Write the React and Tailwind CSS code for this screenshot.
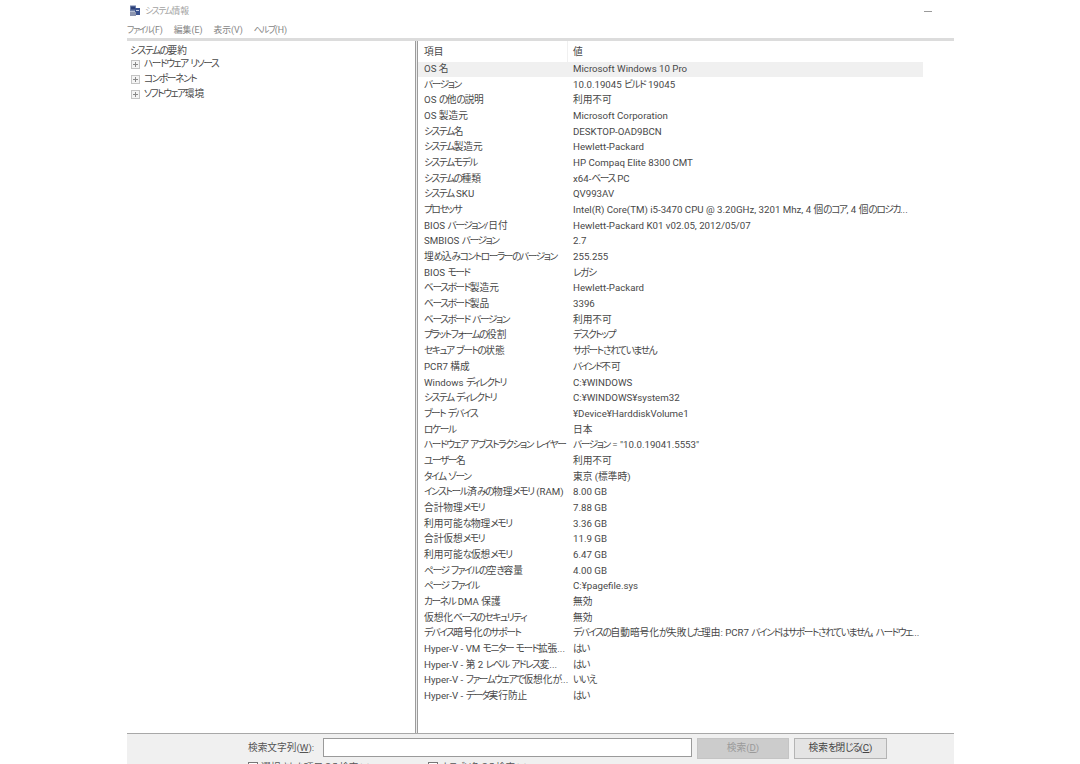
import React from 'react';

const rows = [
  ['OS 名', 'Microsoft Windows 10 Pro'],
  ['バージョン', '10.0.19045 ビルド 19045'],
  ['OS の他の説明', '利用不可'],
  ['OS 製造元', 'Microsoft Corporation'],
  ['システム名', 'DESKTOP-OAD9BCN'],
  ['システム製造元', 'Hewlett-Packard'],
  ['システムモデル', 'HP Compaq Elite 8300 CMT'],
  ['システムの種類', 'x64-ベース PC'],
  ['システム SKU', 'QV993AV'],
  ['プロセッサ', 'Intel(R) Core(TM) i5-3470 CPU @ 3.20GHz, 3201 Mhz, 4 個のコア, 4 個のロジカ...'],
  ['BIOS バージョン/日付', 'Hewlett-Packard K01 v02.05, 2012/05/07'],
  ['SMBIOS バージョン', '2.7'],
  ['埋め込みコントローラーのバージョン', '255.255'],
  ['BIOS モード', 'レガシ'],
  ['ベースボード製造元', 'Hewlett-Packard'],
  ['ベースボード製品', '3396'],
  ['ベースボード バージョン', '利用不可'],
  ['プラットフォームの役割', 'デスクトップ'],
  ['セキュア ブートの状態', 'サポートされていません'],
  ['PCR7 構成', 'バインド不可'],
  ['Windows ディレクトリ', 'C:¥WINDOWS'],
  ['システム ディレクトリ', 'C:¥WINDOWS¥system32'],
  ['ブート デバイス', '¥Device¥HarddiskVolume1'],
  ['ロケール', '日本'],
  ['ハードウェア アブストラクション レイヤー', 'バージョン = "10.0.19041.5553"'],
  ['ユーザー名', '利用不可'],
  ['タイム ゾーン', '東京 (標準時)'],
  ['インストール済みの物理メモリ (RAM)', '8.00 GB'],
  ['合計物理メモリ', '7.88 GB'],
  ['利用可能な物理メモリ', '3.36 GB'],
  ['合計仮想メモリ', '11.9 GB'],
  ['利用可能な仮想メモリ', '6.47 GB'],
  ['ページ ファイルの空き容量', '4.00 GB'],
  ['ページ ファイル', 'C:¥pagefile.sys'],
  ['カーネル DMA 保護', '無効'],
  ['仮想化ベースのセキュリティ', '無効'],
  ['デバイス暗号化のサポート', 'デバイスの自動暗号化が失敗した理由: PCR7 バインドはサポートされていません, ハードウェ...'],
  ['Hyper-V - VM モニター モード拡張...', 'はい'],
  ['Hyper-V - 第 2 レベル アドレス変...', 'はい'],
  ['Hyper-V - ファームウェアで仮想化が...', 'いいえ'],
  ['Hyper-V - データ実行防止', 'はい'],
];

const treeItems = ['ハードウェア リソース', 'コンポーネント', 'ソフトウェア環境'];
const menus = ['ファイル(F)', '編集(E)', '表示(V)', 'ヘルプ(H)'];

// the original UI font has condensed kana, so tighten just those runs
function Jp({ children }) {
  const parts = children.split(/([\u3040-\u30ff]+)/);
  return parts.map((part, i) =>
    i % 2 === 1 ? (
      <span key={i} className="tracking-[-1.4px]">{part}</span>
    ) : (
      part
    )
  );
}

function AppIcon() {
  return (
    <svg width="12" height="12" viewBox="0 0 12 12">
      <rect x="1" y="0.5" width="6" height="6" fill="#6d7fa8" />
      <rect x="2" y="1.5" width="4" height="3" fill="#2c3f78" />
      <rect x="6" y="3" width="5" height="7" fill="#39518f" />
      <rect x="1" y="7" width="6" height="4" fill="#8d96b0" />
      <rect x="7" y="5" width="3" height="1" fill="#c9d2e6" />
    </svg>
  );
}

function PlusBox() {
  return (
    <svg width="9" height="9" viewBox="0 0 9 9" className="shrink-0">
      <rect x="0.5" y="0.5" width="8" height="8" fill="#f4f4f4" stroke="#c4c4c4" />
      <path d="M2 4.5h5M4.5 2v5" stroke="#8a8a8a" />
    </svg>
  );
}

export default function App() {
  return (
    <div
      className="w-[1080px] h-[764px] overflow-hidden bg-white text-[9.7px] text-[#484848] pl-[127px] pr-[126px] [font-feature-settings:'palt']"
      style={{ fontFamily: 'Roboto, "Noto Sans CJK JP", sans-serif' }}
    >
      <div className="h-[764px] flex flex-col">
        {/* Title bar */}
        <div className="h-[22px] flex items-center pl-[2px] pr-[22px] shrink-0">
          <AppIcon />
          <span className="ml-[4px] pt-[2px] text-[8.8px] text-[#a2a2a2]"><Jp>システム情報</Jp></span>
          <span className="ml-auto w-[8px] h-px bg-[#9a9a9a]" />
        </div>

        {/* Menu */}
        <div className="h-[16px] flex items-center gap-[11px] pt-[2px] shrink-0 text-[8.8px] text-[#858585]">
          {menus.map((m) => (
            <span key={m}><Jp>{m}</Jp></span>
          ))}
        </div>

        <div className="h-[3px] bg-[#dcdcdc] shrink-0" />

        {/* Panes */}
        <div className="flex flex-1 min-h-0">
          <div className="w-[288px] shrink-0 pt-[1px] pl-[3px]">
            <div className="h-[15px] leading-[15px] translate-y-[0.5px]"><Jp>システムの要約</Jp></div>
            {treeItems.map((t) => (
              <div key={t} className="h-[15px] flex items-center pl-[1px] gap-[4px]">
                <PlusBox />
                <span><Jp>{t}</Jp></span>
              </div>
            ))}
          </div>

          <div className="w-[3px] shrink-0 border-x border-[#9c9c9c] bg-[#ececec]" />

          <div className="flex-1 min-w-0 pr-[31px]">
            <div className="flex h-[20.5px] items-center">
              <div className="w-[150px] h-full pl-[6px] pt-[2px] flex items-center border-r border-[#f0f0f0]">項目</div>
              <div className="pl-[5px] pt-[2px]">値</div>
            </div>
            {rows.map(([k, v], i) => (
              <div key={k} className={`flex h-[15.675px] items-center whitespace-nowrap ${i === 0 ? 'bg-[#f0f0f0]' : ''}`}>
                <div className="w-[150px] pl-[6px] shrink-0"><Jp>{k}</Jp></div>
                <div className="pl-[5px] min-w-0"><Jp>{v}</Jp></div>
              </div>
            ))}
          </div>
        </div>

        {/* Find bar */}
        <div className="h-[31px] shrink-0 bg-[#f0f0f0] border-t border-[#a8a8a8] relative">
          <div className="flex items-start pt-[4px] pl-[121px]">
            <span className="w-[75px] pt-[3px] leading-[14px] text-[#555]">
              検索文字列(<u>W</u>):
            </span>
            <div className="w-[369px] h-[19px] bg-white border border-[#9a9a9a]" />
            <div className="ml-[5px] w-[92px] h-[21px] bg-[#cccccc] border border-[#c4c4c4] flex items-center justify-center text-[#9a9a9a]">
              <span>検索(<u>D</u>)</span>
            </div>
            <div className="ml-[5px] w-[93px] h-[21px] bg-[#e4e4e4] border border-[#b4b4b4] flex items-center justify-center text-[#444]">
              <span><Jp>検索を閉じる(</Jp><u>C</u>)</span>
            </div>
          </div>
          {/* next row of options is cut off by the window edge */}
          <div className="absolute left-[121px] top-[28px] flex text-[#555]">
            <div className="w-[180px] flex items-start gap-[3px]">
              <span className="w-[10px] h-[10px] bg-white border border-[#777]" />
              <span className="leading-[12px]"><Jp>選択された項目のみ検索(</Jp><u>S</u>)</span>
            </div>
            <div className="flex items-start gap-[3px]">
              <span className="w-[10px] h-[10px] bg-white border border-[#777]" />
              <span className="leading-[12px]"><Jp>カテゴリ名のみ検索(</Jp><u>R</u>)</span>
            </div>
          </div>
        </div>
      </div>
    </div>
  );
}
